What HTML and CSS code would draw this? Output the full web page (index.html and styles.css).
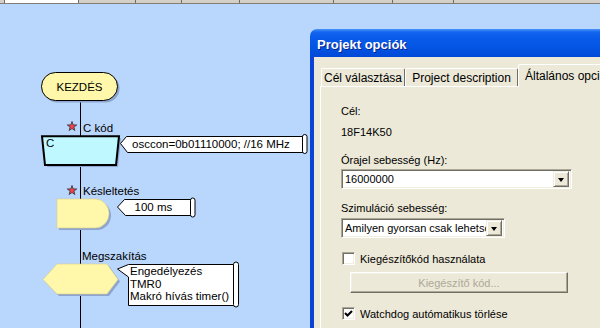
FILE: index.html
```html
<!DOCTYPE html>
<html>
  <head>
    <title>Flowcode - Projekt opciók</title>
    <link rel="stylesheet" href="styles.css">
  </head>
  <body>
    <div class="ruler">
      <span class="seg s1"></span>
      <span class="seg s2"></span>
      <span class="seg s3"></span>
      <span class="seg s4"></span>
      <span class="seg s5"></span>
      <span class="seg s6"></span>
      <span class="seg s7"></span>
      <span class="seg s8"></span>
      <span class="seg s9"></span>
    </div>

    <svg class="chart" width="600" height="324" viewBox="0 4 600 324">
      <!-- main wire -->
      <line x1="80.5" y1="100" x2="80.5" y2="330" stroke="#000"/>

      <!-- start -->
      <rect x="43.5" y="74.5" width="76" height="28" rx="14" fill="#8ea6cf"/>
      <rect x="41.5" y="72.5" width="76" height="28" rx="14" fill="#fff7aa" stroke="#000"/>
      <text x="79.5" y="91" text-anchor="middle">KEZDÉS</text>

      <!-- C code -->
      <g transform="translate(72,126.5)">
        <polygon class="star" points="0,-5 1.18,-1.62 4.76,-1.55 1.9,0.62 2.94,4.05 0,2 -2.94,4.05 -1.9,0.62 -4.76,-1.55 -1.18,-1.62"/>
      </g>
      <text x="83" y="131.5">C kód</text>
      <polygon points="44,138.3 121,138.3 118,167 47,167" fill="#8ea6cf"/>
      <polygon points="42,136.3 119,136.3 116,165 45,165" fill="#bff9ff" stroke="#000" stroke-width="2"/>
      <text x="46" y="146.5">C</text>

      <polygon points="120.5,143.5 126.5,136.5 303,136.5 303,152.5 127.5,152.5" fill="#fff" stroke="#000"/>
      <rect x="302.5" y="134.5" width="4.5" height="19" rx="2.2" fill="#fff" stroke="#000"/>
      <text x="132" y="147.5">osccon=0b01110000; //16 MHz</text>

      <!-- delay -->
      <g transform="translate(72,190.5)">
        <polygon class="star" points="0,-5 1.18,-1.62 4.76,-1.55 1.9,0.62 2.94,4.05 0,2 -2.94,4.05 -1.9,0.62 -4.76,-1.55 -1.18,-1.62"/>
      </g>
      <text x="83" y="195">Késleltetés</text>
      <path d="M59 201 H97 A14 14.5 0 0 1 111 215.5 A14 14.5 0 0 1 97 230 H59 Z" fill="#8ea6cf"/>
      <path d="M57 199 H95 A14 14.5 0 0 1 109 213.5 A14 14.5 0 0 1 95 228 H57 Z" fill="#fff7aa" stroke="#d8cf8a" stroke-width="0.6"/>

      <polygon points="117.5,207 124.5,199.5 192,199.5 192,215.5 125.5,215.5" fill="#fff" stroke="#000"/>
      <rect x="190.5" y="198" width="4.5" height="19" rx="2.2" fill="#fff" stroke="#000"/>
      <text x="134.5" y="210.5">100 ms</text>

      <!-- interrupt -->
      <text x="82" y="260">Megszakítás</text>
      <polygon points="45,281.5 59,266 109,266 120,281.5 109,296 59,296" fill="#8ea6cf"/>
      <polygon points="43,279.5 57,264 107,264 118,279.5 107,294 57,294" fill="#fff7aa" stroke="#d8cf8a" stroke-width="0.6"/>

      <polygon points="117.5,269 128.5,264.5 235,264.5 235,305.5 128.5,305.5 128.5,277" fill="#fff" stroke="#000"/>
      <rect x="233.5" y="262" width="5" height="45" rx="2.5" fill="#fff" stroke="#000"/>
      <text x="130" y="275">Engedélyezés</text>
      <text x="130" y="287.5">TMR0</text>
      <text x="130" y="300">Makró hívás timer()</text>
    </svg>

    <div class="dialog">
      <div class="titlebar">Projekt opciók</div>
      <div class="frame">
        <div class="tabs">
          <div class="tab tab-target">Cél választása</div>
          <div class="tab tab-desc">Project description</div>
          <div class="tab tab-active">Általános opciók</div>
        </div>
        <div class="panel">
          <p class="txt">Cél:</p>
          <p class="txt target">18F14K50</p>
          <p class="txt clock">Órajel sebesség (Hz):</p>
          <div class="combo combo-clock"><span class="value">16000000</span><span class="drop"></span></div>
          <p class="txt sim">Szimuláció sebesség:</p>
          <div class="combo combo-sim"><span class="value">Amilyen gyorsan csak lehetséges</span><span class="drop"></span></div>
          <div class="check check-extra"><span class="box"></span>Kiegészítőkód használata</div>
          <div class="btn">Kiegészítő kód...</div>
          <div class="check check-dog">
            <span class="box">
              <svg width="9" height="9" viewBox="0 0 9 9"><polyline points="1,4 3.5,6.5 8,2" fill="none" stroke="#000" stroke-width="2"/></svg>
            </span>Watchdog autómatikus törlése
          </div>
        </div>
      </div>
    </div>
  </body>
</html>
```

FILE: styles.css
```css
body{
  margin: 0;
  width: 600px;
  height: 328px;
  overflow: hidden;
  position: relative;
  background-color: #b9d6fc;
  font-family: "Liberation Sans", Arial, sans-serif;
}

/* ruler strip at the top */
.ruler{
  display: flex;
  height: 3px;
  background-color: #d4d0c8;
  border-bottom: 1px solid #807e76;
}

.seg{
  height: 3px;
  border-right: 1px solid #6e6c64;
}

.s1{ width: 4px; }
.s2{ width: 73px; background-color: #fff; }
.s3{ width: 56px; }
.s4{ width: 45px; }
.s5{ width: 57px; }
.s6{ width: 93px; }
.s7{ width: 58px; }
.s8{ width: 60px; }
.s9{ flex: 1; border-right: none; }

/* flowchart */
.chart{
  display: block;
}

.chart text{
  font-family: "Liberation Sans", Arial, sans-serif;
  font-size: 11.5px;
  fill: #000;
}

.star{
  fill: #f2404c;
  stroke: #333;
  stroke-width: 0.8;
}

/* dialog window */
.dialog{
  position: absolute;
  left: 310px;
  top: 29px;
  width: 300px;
  height: 310px;
  border-radius: 7px 7px 0 0;
  overflow: hidden;
}

.titlebar{
  height: 28px;
  padding: 2px 0 0 7px;
  box-sizing: border-box;
  display: flex;
  align-items: center;
  color: #fff;
  font-size: 13px;
  font-weight: bold;
  text-shadow: 1px 1px #0a2590;
  background: linear-gradient(#4a94f8 0px, #1466ef 3px, #0a5ceb 8px, #0556e4 60%, #0049d8 100%);
}

.frame{
  height: 290px;
  background-color: #ece9d8;
  border-left: 4px solid #0b43d6;
  padding: 7px 0 0 6px;
}

.tabs{
  display: flex;
  align-items: flex-end;
  height: 22px;
  margin-left: 1px;
}

.tab{
  flex-shrink: 0;
  height: 18px;
  box-sizing: border-box;
  display: flex;
  align-items: center;
  justify-content: center;
  white-space: nowrap;
  font-size: 12px;
  background-color: #ece9d8;
  border-top: 1px solid #fff;
  border-left: 1px solid #fff;
  border-right: 1px solid #716f64;
  border-radius: 2px 2px 0 0;
}

.tab-target{ width: 84px; }

.tab-desc{ width: 113px; }

.tab-active{
  height: 23px;
  margin-bottom: -1px;
  padding-left: 6px;
  justify-content: flex-start;
  width: 120px;
  position: relative;
}

.panel{
  height: 260px;
  border-top: 1px solid #fff;
  border-left: 1px solid #fff;
  padding: 18px 0 0 20px;
}

.txt{
  margin: 0;
  font-size: 11px;
  line-height: 13px;
}

.target{ margin-top: 8px; }
.clock{ margin-top: 15px; }
.sim{ margin-top: 13px; }

.combo{
  height: 20px;
  box-sizing: border-box;
  display: flex;
  align-items: center;
  background-color: #fff;
  border: 1px solid;
  border-color: #aca899 #fff #fff #aca899;
  box-shadow: inset 1px 1px #716f64, inset -1px -1px #f1efe2;
  padding: 0 2px 0 2px;
  font-size: 11px;
  overflow: hidden;
}

.combo-clock{
  width: 231px;
  margin-top: 2px;
}

.combo-sim{
  width: 164px;
  margin-top: 3px;
}

.value{
  flex: 1;
  white-space: nowrap;
  overflow: hidden;
  padding-left: 1px;
}

.drop{
  width: 16px;
  height: 16px;
  box-sizing: border-box;
  flex-shrink: 0;
  background-color: #ece9d8;
  border: 1px solid;
  border-color: #f1efe2 #716f64 #716f64 #f1efe2;
  box-shadow: inset 1px 1px #fff, inset -1px -1px #aca899;
  display: flex;
  align-items: center;
  justify-content: center;
}

.drop::after{
  content: "";
  border-left: 3.5px solid transparent;
  border-right: 3.5px solid transparent;
  border-top: 4px solid #000;
  margin-top: 1px;
}

.check{
  display: flex;
  align-items: center;
  font-size: 11px;
  height: 13px;
  margin-left: 1px;
}

.check-extra{ margin-top: 14px; }
.check-dog{ margin-top: 14px; }

.box{
  width: 13px;
  height: 13px;
  box-sizing: border-box;
  margin-right: 5px;
  background-color: #fff;
  border: 1px solid;
  border-color: #aca899 #fff #fff #aca899;
  box-shadow: inset 1px 1px #716f64, inset -1px -1px #f1efe2;
  display: flex;
  align-items: center;
  justify-content: center;
}

.box svg{
  display: block;
}

.btn{
  width: 218px;
  height: 21px;
  box-sizing: border-box;
  margin: 7px 0 0 9px;
  display: flex;
  align-items: center;
  justify-content: center;
  font-size: 11px;
  color: #aca899;
  background-color: #ece9d8;
  border: 1px solid;
  border-color: #fff #716f64 #716f64 #fff;
  box-shadow: inset -1px -1px #aca899, inset 1px 1px #f1efe2;
}
```
